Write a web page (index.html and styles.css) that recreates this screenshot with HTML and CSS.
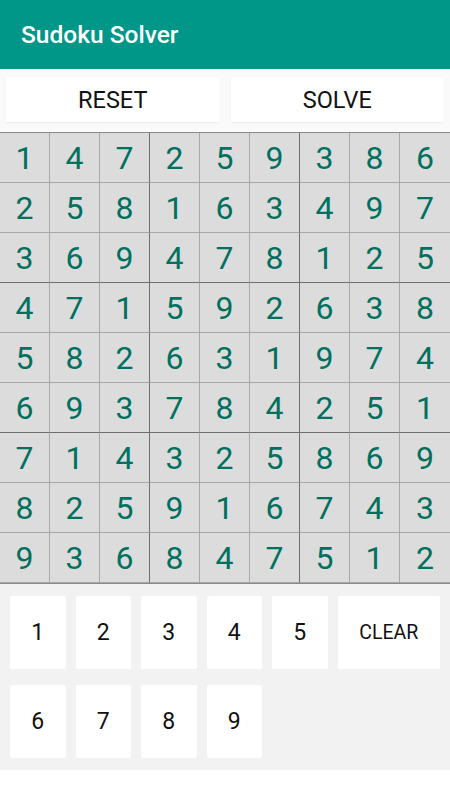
FILE: index.html
```html
<!DOCTYPE html>
<html lang="en">
  <head>
    <meta charset="UTF-8" />
    <meta name="viewport" content="width=device-width, initial-scale=1.0" />
    <title>Sudoku Solver</title>
    <link rel="stylesheet" href="styles.css">
  </head>

  <body>
    <!-- 标题栏 -->
    <div class="toolbar">Sudoku Solver</div>

    <!-- 操作按钮 -->
    <div class="actions">
      <div class="btn">RESET</div>
      <div class="btn">SOLVE</div>
    </div>

    <!-- 数独格子 -->
    <div class="board" id="board"></div>

    <!-- 数字键盘 -->
    <div class="keypad">
      <div class="key">1</div>
      <div class="key">2</div>
      <div class="key">3</div>
      <div class="key">4</div>
      <div class="key">5</div>
      <div class="key clear">CLEAR</div>
      <div class="key">6</div>
      <div class="key">7</div>
      <div class="key">8</div>
      <div class="key">9</div>
    </div>

    <script>
      var rows = [
        "147259386",
        "258163497",
        "369478125",
        "471592638",
        "582631974",
        "693784251",
        "714325869",
        "825916743",
        "936847512"
      ];
      var board = document.getElementById("board");
      for (var r = 0; r < 9; r++) {
        for (var c = 0; c < 9; c++) {
          var cell = document.createElement("div");
          cell.className = "cell";
          // 3x3 宫格边线
          if (c % 3 == 2 && c < 8) cell.className += " edge-r";
          if (r % 3 == 2 && r < 8) cell.className += " edge-b";
          cell.textContent = rows[r][c];
          board.appendChild(cell);
        }
      }
    </script>
  </body>
</html>
```

FILE: styles.css
```css
* {
  box-sizing: border-box;
}

body {
  margin: 0;
  background: #fff;
  font-family: Roboto, "Liberation Sans", sans-serif;
}

.toolbar {
  height: 69px;
  background: #009688;
  color: #fff;
  font-size: 24.5px;
  font-weight: 500;
  padding-left: 21px;
  display: flex;
  align-items: center;
}

.actions {
  display: flex;
  gap: 11px;
  padding: 8px 6px 10px;
  background: #fafafa;
}

.btn {
  flex: 1;
  height: 45px;
  background: #fff;
  box-shadow: 0 1px 2px rgba(0, 0, 0, 0.06);
  display: flex;
  align-items: center;
  justify-content: center;
  font-size: 23.5px;
  color: #111;
}

.board {
  display: grid;
  grid-template-columns: repeat(9, 50px);
  grid-template-rows: repeat(9, 50px);
  background: #dcdcdc;
  border-top: 1px solid #8a8a8a;
  border-bottom: 1px solid #8a8a8a;
}

.cell {
  border-right: 1px solid #a8a8a8;
  border-bottom: 1px solid #a8a8a8;
  display: flex;
  align-items: center;
  justify-content: center;
  font-size: 32px;
  color: #00705f;
}

.cell:nth-child(9n) {
  border-right: none;
}

.cell.edge-r {
  border-right-color: #6e6e6e;
}

.cell.edge-b {
  border-bottom-color: #6e6e6e;
}

.keypad {
  display: grid;
  grid-template-columns: repeat(5, 55.5px) 1fr;
  grid-template-rows: 73px 73px;
  column-gap: 10px;
  row-gap: 16px;
  padding: 12px 10px 12px;
  background: #f2f2f2;
}

.key {
  background: #fff;
  border-radius: 2px;
  display: flex;
  align-items: center;
  justify-content: center;
  font-size: 23px;
  color: #111;
}

.key.clear {
  font-size: 19.5px;
}
```
